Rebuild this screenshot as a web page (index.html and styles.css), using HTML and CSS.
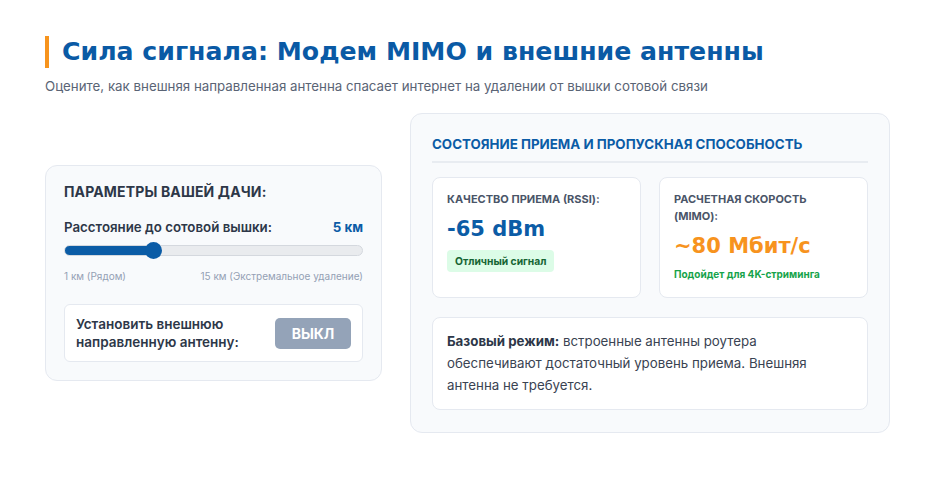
FILE: index.html
```html
<!DOCTYPE html>
<html lang="ru">
<head>
    <meta charset="UTF-8">
    <meta name="viewport" content="width=device-width, initial-scale=1.0">
    <title>Сила сигнала: Модем MIMO</title>
    <link rel="stylesheet" href="styles.css">
</head>
<body>
    <div class="page">
        <header class="page-head">
            <h1>Сила сигнала: Модем MIMO и внешние антенны</h1>
            <p>Оцените, как внешняя направленная антенна спасает интернет на удалении от вышки сотовой связи</p>
        </header>

        <div class="layout">
            <div class="controls">
                <h3>Параметры вашей дачи:</h3>
                <div class="range-row">
                    <span>Расстояние до сотовой вышки:</span>
                    <span class="range-value">5 км</span>
                </div>
                <input type="range" class="slider" min="1" max="15" value="5"
                       style="background: linear-gradient(to right, #0b5ca6 0%, #0b5ca6 29%, #e9ebee 29%, #e9ebee 100%);">
                <div class="range-labels">
                    <span>1 км (Рядом)</span>
                    <span>15 км (Экстремальное удаление)</span>
                </div>
                <div class="toggle-box">
                    <span>Установить внешнюю направленную антенну:</span>
                    <button class="toggle-btn">ВЫКЛ</button>
                </div>
            </div>

            <div class="results">
                <h3>Состояние приема и пропускная способность</h3>
                <div class="cards">
                    <div class="card">
                        <div class="card-label">Качество приема (RSSI):</div>
                        <div class="card-value blue">-65 dBm</div>
                        <span class="badge">Отличный сигнал</span>
                    </div>
                    <div class="card">
                        <div class="card-label">Расчетная скорость (MIMO):</div>
                        <div class="card-value orange">~80 Мбит/с</div>
                        <div class="card-note">Подойдет для 4K-стриминга</div>
                    </div>
                </div>
                <p class="info"><strong>Базовый режим:</strong> встроенные антенны роутера обеспечивают достаточный уровень приема. Внешняя антенна не требуется.</p>
            </div>
        </div>
    </div>
</body>
</html>
```

FILE: styles.css
```css
body {
    margin: 0;
    background: #fff;
    color: #2d3748;
    font-family: Inter, "Noto Sans", sans-serif;
}
.page {
    width: 845px;
    margin-left: 45px;
    padding-top: 36px;
}
.page-head h1 {
    margin: 0;
    padding-left: 13px;
    border-left: 4px solid #f7941d;
    font-family: "DejaVu Sans", sans-serif;
    font-weight: 700;
    font-size: 25.2px;
    line-height: 32px;
    color: #0a5aa5;
}
.page-head p {
    margin: 10px 0 0;
    font-size: 13.3px;
    line-height: 16px;
    color: #5a6475;
}
.layout {
    display: grid;
    grid-template-columns: 337px 1fr;
    gap: 28px;
    align-items: center;
    margin-top: 19px;
}
.controls {
    background: #f8fafc;
    border: 1px solid #e5e9f0;
    border-radius: 12px;
    padding: 17px 18px 18px;
}
.controls h3 {
    margin: 0 0 17px;
    font-size: 14px;
    line-height: 18px;
    font-weight: 700;
    text-transform: uppercase;
    letter-spacing: 0.15px;
    color: #2d3748;
}
.range-row {
    display: flex;
    justify-content: space-between;
    font-size: 13.3px;
    line-height: 18px;
    font-weight: 600;
    color: #2d3748;
}
.range-value {
    color: #0b5ca6;
    font-weight: 700;
}
.slider {
    -webkit-appearance: none;
    appearance: none;
    display: block;
    box-sizing: border-box;
    width: 100%;
    height: 11px;
    margin: 9px 0 0;
    border: 1px solid #d4d8de;
    border-radius: 6px;
    outline: none;
}
.slider::-webkit-slider-thumb {
    -webkit-appearance: none;
    width: 17px;
    height: 17px;
    border-radius: 50%;
    background: #0b5ca6;
    border: none;
}
.range-labels {
    display: flex;
    justify-content: space-between;
    margin-top: 13px;
    font-size: 10px;
    line-height: 14px;
    color: #94a0b4;
}
.toggle-box {
    display: flex;
    justify-content: space-between;
    align-items: center;
    margin-top: 21px;
    padding: 10px 11px;
    background: #fff;
    border: 1px solid #e5e9f0;
    border-radius: 6px;
    font-size: 13.5px;
    font-weight: 600;
    line-height: 18px;
    color: #2d3748;
}
.toggle-box span {
    width: 180px;
}
.toggle-btn {
    width: 76px;
    height: 31px;
    border: none;
    border-radius: 5px;
    background: #94a3b8;
    color: #fff;
    font-family: inherit;
    font-size: 14px;
    font-weight: 700;
}
.results {
    background: #f8fafc;
    border: 1px solid #e5e9f0;
    border-radius: 12px;
    padding: 22px 21px 22px;
}
.results h3 {
    margin: 0 0 14px;
    padding-bottom: 9px;
    border-bottom: 2px solid #e8ecf1;
    font-size: 13.35px;
    line-height: 16px;
    font-weight: 700;
    text-transform: uppercase;
    color: #0b5ca6;
}
.cards {
    display: grid;
    grid-template-columns: 1fr 1fr;
    gap: 18px;
}
.card {
    background: #fff;
    border: 1px solid #e5e9f0;
    border-radius: 8px;
    padding: 13px 14px 12px;
    min-height: 94px;
}
.card-label {
    font-size: 11px;
    font-weight: 700;
    line-height: 17px;
    text-transform: uppercase;
    color: #4a5568;
}
.card-value {
    margin: 6px 0 5px;
    font-family: "DejaVu Sans", sans-serif;
    font-size: 21px;
    font-weight: 700;
    line-height: 30px;
}
.blue {
    color: #0b5ca6;
}
.orange {
    color: #f7931e;
}
.badge {
    display: inline-block;
    padding: 4px 8px;
    background: #dcfce7;
    border-radius: 4px;
    color: #166534;
    font-size: 10.3px;
    line-height: 14px;
    font-weight: 700;
}
.card-note {
    font-size: 10px;
    line-height: 16px;
    font-weight: 700;
    color: #16a34a;
}
.info {
    margin: 19px 0 0;
    padding: 12px 14px 13px;
    background: #fff;
    border: 1px solid #e5e9f0;
    border-radius: 8px;
    font-size: 13.3px;
    line-height: 22px;
    color: #3a4352;
}
.info strong {
    color: #2d3748;
}
```
